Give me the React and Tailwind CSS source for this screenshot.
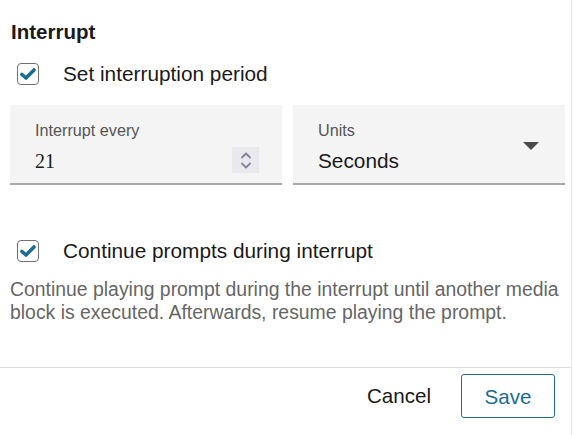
import React from "react";

function Check() {
  return (
    <div className="w-[22px] h-[22px] shrink-0 rounded-[4px] border-[1.5px] border-[#707070] bg-white flex items-center justify-center">
      <svg width="16" height="14" viewBox="0 0 16 14">
        <path d="M2 7.5 L6 11 L14 3" fill="none" stroke="#1b6b96" strokeWidth="3.6" strokeLinecap="round" strokeLinejoin="round" />
      </svg>
    </div>
  );
}

export default function App() {
  return (
    <div className="w-[572px] h-[435px] bg-white border-r border-[#e4e4e4] flex flex-col text-[#1a1a1a]" style={{ fontFamily: '"Liberation Sans", Arial, sans-serif' }}>
      <div className="px-[10px] pr-[6px]">
        <h2 className="mt-[20px] pl-[1px] text-[20.5px] leading-[24px] font-bold">Interrupt</h2>
        <label className="mt-[18px] flex items-center h-[24px] pl-[7px]">
          <Check />
          <span className="ml-[24px] text-[20.8px] leading-[24px]">Set interruption period</span>
        </label>
        <div className="mt-[19px] flex gap-[11px]">
          <div className="w-[272px] h-[80px] bg-[#f4f4f4] border-b-2 border-[#a9a9a9] flex pl-[25px] pr-[23px]">
            <div className="flex-1 pt-[15px]">
              <div className="text-[16.2px] leading-[20px] text-[#555]">Interrupt every</div>
              <div className="mt-[7px] text-[20px] leading-[28px]" style={{ fontFamily: '"Liberation Serif", "Times New Roman", serif' }}>21</div>
            </div>
            <div className="mt-[42px] w-[27px] h-[26px] bg-[#e8e8ed] flex flex-col items-center justify-center gap-[3px]">
              <svg width="12" height="7" viewBox="0 0 12 7"><path d="M2 5.5 L6 1.5 L10 5.5" fill="none" stroke="#85859a" strokeWidth="1.8" strokeLinecap="round" strokeLinejoin="round" /></svg>
              <svg width="12" height="7" viewBox="0 0 12 7"><path d="M2 1.5 L6 5.5 L10 1.5" fill="none" stroke="#85859a" strokeWidth="1.8" strokeLinecap="round" strokeLinejoin="round" /></svg>
            </div>
          </div>
          <div className="w-[272px] h-[80px] bg-[#f4f4f4] border-b-2 border-[#a9a9a9] flex pl-[25px] pr-[26px]">
            <div className="flex-1 pt-[15px]">
              <div className="text-[16.2px] leading-[20px] text-[#555]">Units</div>
              <div className="mt-[7px] text-[20.8px] leading-[28px]">Seconds</div>
            </div>
            <div className="mt-[37px]">
              <svg width="16" height="8" viewBox="0 0 16 8"><path d="M0 0 L16 0 L8 8 Z" fill="#4a4a4a" /></svg>
            </div>
          </div>
        </div>
        <label className="mt-[54px] flex items-center h-[24px] pl-[7px]">
          <Check />
          <span className="ml-[24px] text-[20.8px] leading-[24px]">Continue prompts during interrupt</span>
        </label>
        <p className="mt-[15px] text-[19.4px] leading-[23px] text-[#666]">
          Continue playing prompt during the interrupt until another media block is executed. Afterwards, resume playing the prompt.
        </p>
      </div>
      <div className="mt-[43px] border-t border-[#dcdcdc] flex justify-end items-center pt-[6px] pr-[16px]">
        <button className="text-[20.6px] leading-[24px] text-[#1a1a1a] mr-[30px]">Cancel</button>
        <button className="w-[94px] h-[44px] pt-[1px] rounded-[3px] border-[1.5px] border-[#1b6b96] text-[#1b6b96] text-[20.6px] leading-[24px]">Save</button>
      </div>
    </div>
  );
}
